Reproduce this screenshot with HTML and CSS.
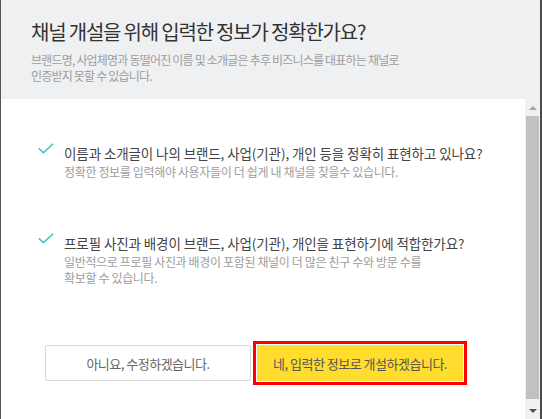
FILE: index.html
```html
<!DOCTYPE html>
<html>
<head>
   <meta charset="utf-8" />
   <title>채널 개설 확인</title>
   <link rel="stylesheet" href="styles.css">
</head>
<body>
   <div class="modal">
       <div class="modal-head">
           <h2 class="modal-title">채널 개설을 위해 입력한 정보가 정확한가요?</h2>
           <p class="modal-desc">브랜드명, 사업체명과 동떨어진 이름 및 소개글은 추후 비즈니스를 대표하는 채널로<br>인증받지 못할 수 있습니다.</p>
       </div>
       <div class="modal-body">
           <div class="body-scroll">
               <ul class="check-list">
                   <li class="check-item">
                       <svg class="check-icon" width="16" height="11" viewBox="0 0 16 11">
                           <path d="M0.8 5.2 L5.3 9.7 L15.2 0.8" fill="none" stroke="#35c4c0" stroke-width="1.5" />
                       </svg>
                       <div>
                           <strong class="check-title">이름과 소개글이 나의 브랜드, 사업(기관), 개인 등을 정확히 표현하고 있나요?</strong>
                           <p class="check-desc">정확한 정보를 입력해야 사용자들이 더 쉽게 내 채널을 찾을수 있습니다.</p>
                       </div>
                   </li>
                   <li class="check-item">
                       <svg class="check-icon" width="16" height="11" viewBox="0 0 16 11">
                           <path d="M0.8 5.2 L5.3 9.7 L15.2 0.8" fill="none" stroke="#35c4c0" stroke-width="1.5" />
                       </svg>
                       <div>
                           <strong class="check-title">프로필 사진과 배경이 브랜드, 사업(기관), 개인을 표현하기에 적합한가요?</strong>
                           <p class="check-desc">일반적으로 프로필 사진과 배경이 포함된 채널이 더 많은 친구 수와 방문 수를<br>확보할 수 있습니다.</p>
                       </div>
                   </li>
               </ul>
               <div class="btn-row">
                   <button class="btn btn-cancel">아니요, 수정하겠습니다.</button>
                   <button class="btn btn-ok">네, 입력한 정보로 개설하겠습니다.</button>
               </div>
           </div>
           <div class="scrollbar">
               <div class="scroll-arrow scroll-up"></div>
               <div class="scroll-thumb"></div>
               <div class="scroll-arrow scroll-down"></div>
           </div>
       </div>
   </div>
</body>
</html>
```

FILE: styles.css
```css
body, html {
    margin: 0;
    width: 100%;
    height: 100%;
    overflow: hidden;
    background-color: #fff;
    font-family: "Noto Sans CJK KR", "Noto Sans", sans-serif;
}
.modal {
    display: flex;
    flex-direction: column;
    height: 419px;
    box-sizing: border-box;
    border-left: 1px solid #555;
    border-right: 2px solid #4a4a4a;
}
.modal-head {
    height: 99px;
    box-sizing: border-box;
    padding: 19px 30px 0 30px;
    background-color: #eff0f2;
}
.modal-title {
    margin: 0;
    font-size: 20px;
    line-height: 26px;
    font-weight: normal;
    letter-spacing: -1.2px;
    color: #333;
}
.modal-desc {
    margin: 7px 0 0 0;
    font-size: 12px;
    line-height: 16px;
    letter-spacing: -0.8px;
    color: #9d9d9d;
}
.modal-body {
    flex: 1;
    display: flex;
    min-height: 0;
}
.body-scroll {
    flex: 1;
    padding: 44px 0 0 37px;
}
.check-list {
    margin: 0;
    padding: 0;
    list-style: none;
}
.check-item {
    display: flex;
    gap: 10px;
    margin-bottom: 53px;
}
.check-item:last-child {
    margin-bottom: 0;
}
.check-icon {
    flex: none;
    display: block;
}
.check-title {
    display: block;
    font-size: 13.5px;
    line-height: 20px;
    font-weight: normal;
    letter-spacing: -0.1px;
    color: #444;
}
.check-desc {
    margin: 1px 0 0 0;
    font-size: 12px;
    line-height: 16px;
    letter-spacing: -0.35px;
    color: #9d9d9d;
}
.btn-row {
    display: flex;
    gap: 6px;
    margin: 59px 0 0 7px;
}
.btn {
    width: 206px;
    height: 36px;
    padding: 0;
    font-family: inherit;
    font-size: 13px;
    letter-spacing: -0.5px;
    border-radius: 2px;
    cursor: pointer;
}
.btn-cancel {
    background-color: #fff;
    border: 1px solid #d8d8d8;
    color: #666;
}
.btn-ok {
    background-color: #ffdc2e;
    border: 1px solid #ffdc2e;
    border-radius: 0;
    color: #555;
    outline: 3px solid #f00;
    outline-offset: 1px;
}
/* fake classic scrollbar */
.scrollbar {
    width: 15px;
    flex: none;
    display: flex;
    flex-direction: column;
    background-color: #f1f1f1;
}
.scroll-arrow {
    height: 17px;
    display: flex;
    align-items: center;
    justify-content: center;
}
.scroll-arrow::before {
    content: "";
    border-left: 4px solid transparent;
    border-right: 4px solid transparent;
}
.scroll-up::before {
    border-bottom: 4px solid #a3a3a3;
}
.scroll-down::before {
    border-top: 4px solid #505050;
}
.scroll-thumb {
    flex: 1;
    margin: 0 1px 3px 1px;
    background-color: #c1c1c1;
}
```
